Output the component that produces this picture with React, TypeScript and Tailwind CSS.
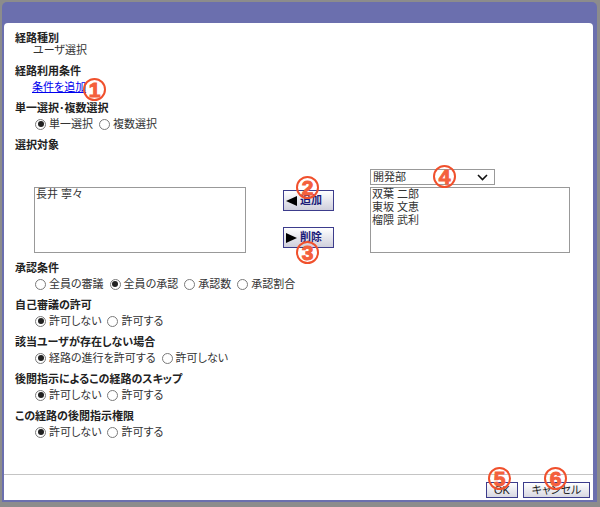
const cjk = "font-['Liberation_Sans','Noto_Sans_CJK_JP',sans-serif]"

type RadioOption = { label: string; checked?: boolean }

function Radio({ label, checked }: RadioOption) {
  return (
    <span className="flex items-center">
      <span className="mr-[3px] flex h-[11px] w-[11px] items-center justify-center rounded-full border border-[#7a7a7a] bg-white">
        {checked && <span className="h-[6px] w-[6px] rounded-full bg-[#222]" />}
      </span>
      {label}
    </span>
  )
}

function Section({ title, options, className }: { title: string; options: RadioOption[]; className: string }) {
  return (
    <div className={className}>
      <div className="h-[16px] leading-[16px] font-semibold text-[#222]">{title}</div>
      <div className="flex h-[16px] gap-[6px] pl-[20px] leading-[16px] text-[#333]">
        {options.map((o) => (
          <Radio key={o.label} {...o} />
        ))}
      </div>
    </div>
  )
}

function Marker({ n, className }: { n: number; className: string }) {
  return (
    <span
      className={`absolute flex h-[23px] w-[23px] items-center justify-center rounded-full border-2 border-[#f0502c] text-[21px] leading-none font-bold text-[#f4603c] [-webkit-text-stroke:1px_#f4603c] font-['Liberation_Sans',sans-serif] ${className}`}
    >
      {n}
    </span>
  )
}

function MoveButton({ label, arrow }: { label: string; arrow: 'left' | 'right' }) {
  return (
    <button className="flex h-[21px] w-[51px] items-center border border-[#3c3c8c] bg-gradient-to-b from-white to-[#cfcfdc] pl-[2px] font-semibold text-[#1a1a78]">
      <span className={arrow === 'left' ? 'border-y-[5px] border-r-[11px] border-y-transparent border-r-black' : 'border-y-[5px] border-l-[11px] border-y-transparent border-l-black'} />
      <span className="ml-[3px]">{label}</span>
    </button>
  )
}

export default function App() {
  return (
    <div className={`relative h-[507px] w-[600px] overflow-hidden bg-[#8c8c8c] text-[11px] [font-feature-settings:'palt'] ${cjk}`}>
      <div className="m-[2px] flex h-[500px] w-[595px] flex-col rounded-t-[5px] bg-[#6b6fae] pl-[2px] pr-[2px] pb-[2px]">
        <div className="h-[21px] shrink-0" />
        <div className="mr-[2px] flex flex-1 flex-col rounded-t-[4px] bg-white">
          <div className="flex-1 pl-[11px] pt-[7px]">
            <div className="h-[16px] leading-[16px] font-semibold text-[#222]">経路種別</div>
            <div className="-mt-[4px] h-[16px] pl-[18px] leading-[16px] text-[#333]">ユーザ選択</div>

            <div className="mt-[5px] h-[16px] leading-[16px] font-semibold text-[#222]">経路利用条件</div>
            <div className="h-[16px] pl-[17px] leading-[16px] text-[#0000ee] underline">条件を追加</div>

            <Section className="mt-[5px]" title="単一選択･複数選択" options={[{ label: '単一選択', checked: true }, { label: '複数選択' }]} />

            <div className="mt-[5px] h-[16px] leading-[16px] font-semibold text-[#222]">選択対象</div>

            <div className="mt-[16px] flex h-[84px] items-start">
              <div className="mt-[18px] ml-[19px] h-[66px] w-[212px] border border-[#999] pl-[1px] leading-[13px] text-[#333]">
                長井 寧々
              </div>
              <div className="ml-[37px] flex flex-col gap-[16px] pt-[21px]">
                <MoveButton label="追加" arrow="left" />
                <MoveButton label="削除" arrow="right" />
              </div>
              <div className="ml-[36px] flex flex-col gap-[2px]">
                <div className="flex h-[16px] w-[125px] items-center justify-between border border-[#999] pl-[2px] pr-[6px] text-[#333]">
                  開発部
                  <svg width="11" height="7" viewBox="0 0 11 7" fill="none" stroke="#111" strokeWidth="1.6">
                    <path d="M1 1l4.5 4.5L10 1" />
                  </svg>
                </div>
                <div className="h-[66px] w-[200px] border border-[#999] pl-[1px] leading-[13px] text-[#333]">
                  <div>双葉 二郎</div>
                  <div>東坂 文恵</div>
                  <div>榴隈 武利</div>
                </div>
              </div>
            </div>

            <Section
              className="mt-[7px]"
              title="承認条件"
              options={[{ label: '全員の審議' }, { label: '全員の承認', checked: true }, { label: '承認数' }, { label: '承認割合' }]}
            />
            <Section className="mt-[5px]" title="自己審議の許可" options={[{ label: '許可しない', checked: true }, { label: '許可する' }]} />
            <Section className="mt-[5px]" title="該当ユーザが存在しない場合" options={[{ label: '経路の進行を許可する', checked: true }, { label: '許可しない' }]} />
            <Section className="mt-[5px]" title="後閲指示によるこの経路のスキップ" options={[{ label: '許可しない', checked: true }, { label: '許可する' }]} />
            <Section className="mt-[5px]" title="この経路の後閲指示権限" options={[{ label: '許可しない', checked: true }, { label: '許可する' }]} />
          </div>
          <div className="flex h-[26px] shrink-0 justify-end gap-[5px] border-t border-[#c4c4c4] pt-[7px] pr-[3px]">
            <button className="h-[16px] w-[32px] border border-[#3c3c8c] bg-gradient-to-b from-white to-[#d8d8e2] leading-[14px] text-[#222]">OK</button>
            <button className="h-[16px] w-[67px] border border-[#3c3c8c] bg-gradient-to-b from-white to-[#d8d8e2] leading-[14px] text-[#222]">キャンセル</button>
          </div>
        </div>
      </div>

      <Marker n={1} className="left-[83px] top-[78px]" />
      <Marker n={2} className="left-[296px] top-[176px]" />
      <Marker n={3} className="left-[296px] top-[241px]" />
      <Marker n={4} className="left-[433px] top-[165px]" />
      <Marker n={5} className="left-[488px] top-[467px]" />
      <Marker n={6} className="left-[544px] top-[467px]" />
    </div>
  )
}
